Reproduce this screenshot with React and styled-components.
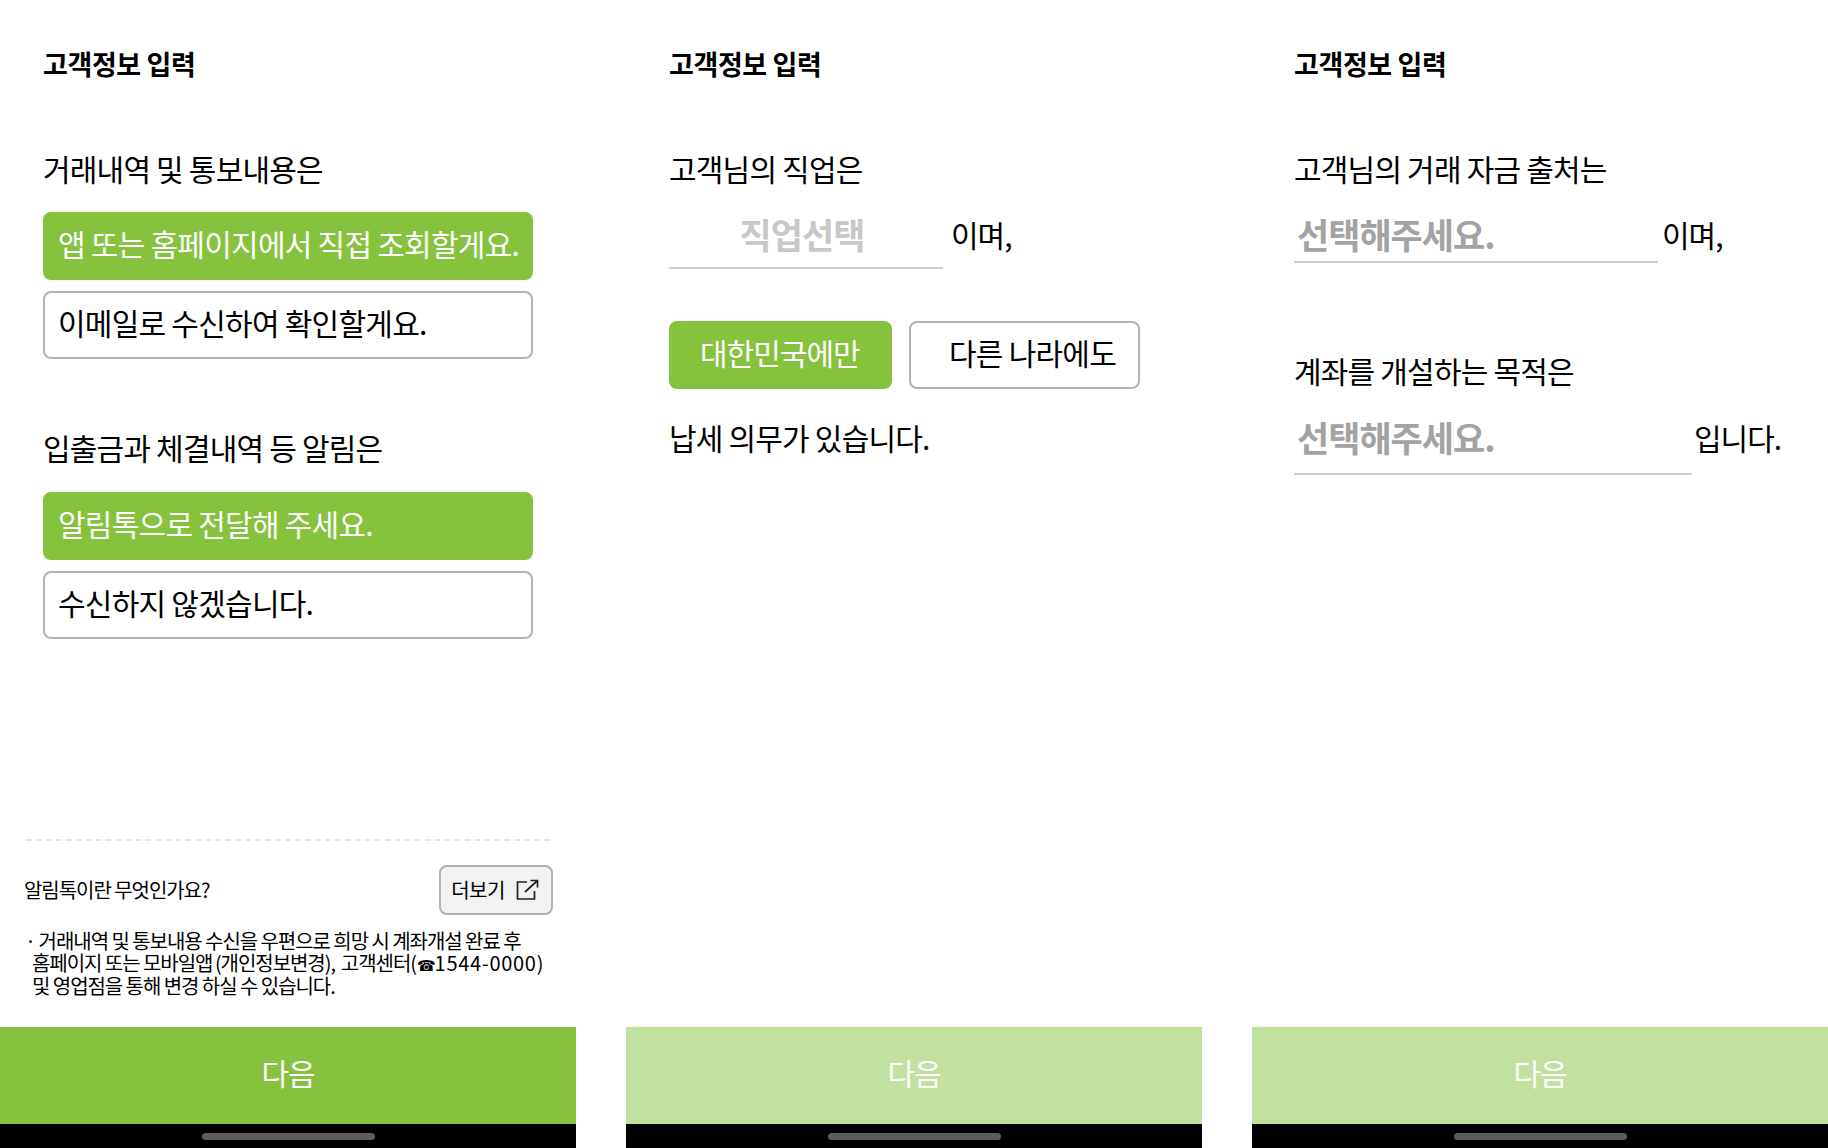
import React from 'react';
import styled, { createGlobalStyle } from 'styled-components';

const GlobalStyle = createGlobalStyle`
  html, body {
    margin: 0;
    padding: 0;
    background: #fff;
  }
  body {
    font-family: "Noto Sans CJK KR", "Noto Sans", sans-serif;
    color: #000;
  }
`;

const GREEN = '#85c23e';

const Page = styled.div`
  display: grid;
  grid-template-columns: repeat(3, 576px);
  column-gap: 50px;
  width: 1828px;
  height: 1148px;
  overflow: hidden;
`;

const Screen = styled.section`
  display: flex;
  flex-direction: column;
  height: 1148px;
`;

const Body = styled.div`
  flex: 1;
  display: flex;
  flex-direction: column;
  padding: 44px 43px 29px ${(p) => p.$left || 43}px;
`;

const Title = styled.h1`
  margin: 0 0 62px;
  font-size: 27px;
  line-height: 40px;
  font-weight: 700;
  letter-spacing: -0.4px;
`;

const Question = styled.p`
  margin: 0;
  font-size: 30px;
  line-height: 44px;
  font-weight: 400;
  letter-spacing: -0.8px;
  margin-top: ${(p) => p.$top || 0}px;
`;

const Options = styled.div`
  display: flex;
  flex-direction: column;
  gap: 11px;
  margin-top: ${(p) => p.$top || 22}px;
`;

const Option = styled.button`
  box-sizing: border-box;
  display: flex;
  align-items: center;
  width: ${(p) => (p.$width ? `${p.$width}px` : '100%')};
  height: 68px;
  padding: 0 0 6px ${(p) => p.$indent || 13}px;
  font-family: inherit;
  font-size: 30px;
  letter-spacing: ${(p) => p.$spacing || -0.75}px;
  white-space: nowrap;
  border-radius: 8px;
  color: ${(p) => (p.$on ? '#fff' : '#000')};
  background: ${(p) => (p.$on ? GREEN : '#fff')};
  border: 2px solid ${(p) => (p.$on ? GREEN : '#b2b2b2')};
`;

const Footer = styled.div`
  margin: auto -43px 0;
  padding: 0 24px 0 24px;
`;

const Dashed = styled.div`
  margin: 0 2px;
  border-top: 2px dashed #e6e6e6;
`;

const InfoRow = styled.div`
  display: flex;
  align-items: center;
  justify-content: space-between;
  margin-top: 24px;
`;

const InfoLabel = styled.span`
  font-size: 20px;
  letter-spacing: -1.05px;
`;

const MoreButton = styled.button`
  box-sizing: border-box;
  display: flex;
  align-items: center;
  justify-content: center;
  gap: 11px;
  width: 114px;
  height: 50px;
  margin-right: -1px;
  padding: 0 2px 0 0;
  font-family: inherit;
  font-size: 20px;
  letter-spacing: -0.6px;
  color: #000;
  background: #f2f2f2;
  border: 2px solid #b2b2b2;
  border-radius: 8px;
`;

const Note = styled.p`
  margin: 15px 0 0;
  padding-left: 8px;
  text-indent: -7px;
  font-size: 20px;
  line-height: 22.8px;
  letter-spacing: -1.05px;
  white-space: pre-line;
`;

const Parens = styled.span`
  padding: 0 2.5px;
`;

const Phone = styled.span`
  font-family: "DejaVu Sans", sans-serif;
  font-size: 15px;
  line-height: 0;
  margin-left: 1px;
`;

const Digits = styled.span`
  letter-spacing: 0.7px;
`;

const NextButton = styled.button`
  display: block;
  flex: none;
  width: 100%;
  height: 97px;
  padding: 0 0 7px;
  border: 0;
  font-family: inherit;
  font-size: 30px;
  letter-spacing: -1px;
  color: #fff;
  background: ${(p) => (p.$off ? '#c2e19e' : GREEN)};
`;

const HomeBar = styled.div`
  flex: none;
  display: flex;
  align-items: center;
  justify-content: center;
  height: 24px;
  background: #000;
`;

const Handle = styled.div`
  width: 173px;
  height: 7px;
  border-radius: 4px;
  background: #5c5c5c;
`;

const FieldRow = styled.div`
  display: flex;
  align-items: flex-start;
  margin-top: ${(p) => p.$top || 19}px;
`;

const Select = styled.div`
  box-sizing: border-box;
  width: ${(p) => p.$width}px;
  height: ${(p) => p.$height}px;
  padding: 0 ${(p) => (p.$center ? '8px' : '0')} 0 ${(p) => (p.$center ? '0' : '3px')};
  text-align: ${(p) => (p.$center ? 'center' : 'left')};
  border-bottom: 2px solid #cfcfcf;
  font-size: 35px;
  line-height: 50px;
  font-weight: 700;
  letter-spacing: -1px;
  color: ${(p) => p.$color};
`;

const Suffix = styled.span`
  margin-left: ${(p) => p.$left}px;
  font-size: 30px;
  line-height: 50px;
  letter-spacing: -1px;
`;

const ChoiceRow = styled.div`
  display: flex;
  gap: 17px;
  margin-top: 52px;
`;

const NextBlock = ({ off }) => (
  <>
    <NextButton $off={off}>다음</NextButton>
    <HomeBar>
      <Handle />
    </HomeBar>
  </>
);

const ExternalIcon = () => (
  <svg width="23" height="21" viewBox="0 0 23 21" fill="none" stroke="#222" strokeWidth="1.7">
    <path d="M11 3H1.5v17h17v-8" />
    <path d="M9 13L21 2M14.5 1.5h7v7" />
  </svg>
);

export default function App() {
  return (
    <Page>
      <GlobalStyle />
      <Screen>
        <Body>
          <Title>고객정보 입력</Title>
          <Question>거래내역 및 통보내용은</Question>
          <Options>
            <Option $on>앱 또는 홈페이지에서 직접 조회할게요.</Option>
            <Option>이메일로 수신하여 확인할게요.</Option>
          </Options>
          <Question $top={66}>입출금과 체결내역 등 알림은</Question>
          <Options $top={23}>
            <Option $on>알림톡으로 전달해 주세요.</Option>
            <Option>수신하지 않겠습니다.</Option>
          </Options>
          <Footer>
            <Dashed />
            <InfoRow>
              <InfoLabel>알림톡이란 무엇인가요?</InfoLabel>
              <MoreButton>
                더보기
                <ExternalIcon />
              </MoreButton>
            </InfoRow>
            <Note>
              {'· 거래내역 및 통보내용 수신을 우편으로 희망 시 계좌개설 완료 후\n홈페이지 또는 모바일앱'}
              <Parens>(개인정보변경),</Parens>
              {' 고객센터('}
              <Phone>☎</Phone>
              <Digits>1544-0000)</Digits>
              {'\n및 영업점을 통해 변경 하실 수 있습니다.'}
            </Note>
          </Footer>
        </Body>
        <NextBlock />
      </Screen>

      <Screen>
        <Body>
          <Title>고객정보 입력</Title>
          <Question>고객님의 직업은</Question>
          <FieldRow>
            <Select $width={274} $height={60} $center $color="#c8c8c8">직업선택</Select>
            <Suffix $left={8}>이며,</Suffix>
          </FieldRow>
          <ChoiceRow>
            <Option $on $width={223} $indent={29} $spacing={-1}>대한민국에만</Option>
            <Option $width={231} $indent={38}>다른 나라에도</Option>
          </ChoiceRow>
          <Question $top={26}>납세 의무가 있습니다.</Question>
        </Body>
        <NextBlock off />
      </Screen>

      <Screen>
        <Body $left={42}>
          <Title>고객정보 입력</Title>
          <Question>고객님의 거래 자금 출처는</Question>
          <FieldRow>
            <Select $width={364} $height={54} $color="#a3a3a3">선택해주세요.</Select>
            <Suffix $left={4}>이며,</Suffix>
          </FieldRow>
          <Question $top={85}>계좌를 개설하는 목적은</Question>
          <FieldRow $top={20}>
            <Select $width={398} $height={63} $color="#a3a3a3">선택해주세요.</Select>
            <Suffix $left={2}>입니다.</Suffix>
          </FieldRow>
        </Body>
        <NextBlock off />
      </Screen>
    </Page>
  );
}
